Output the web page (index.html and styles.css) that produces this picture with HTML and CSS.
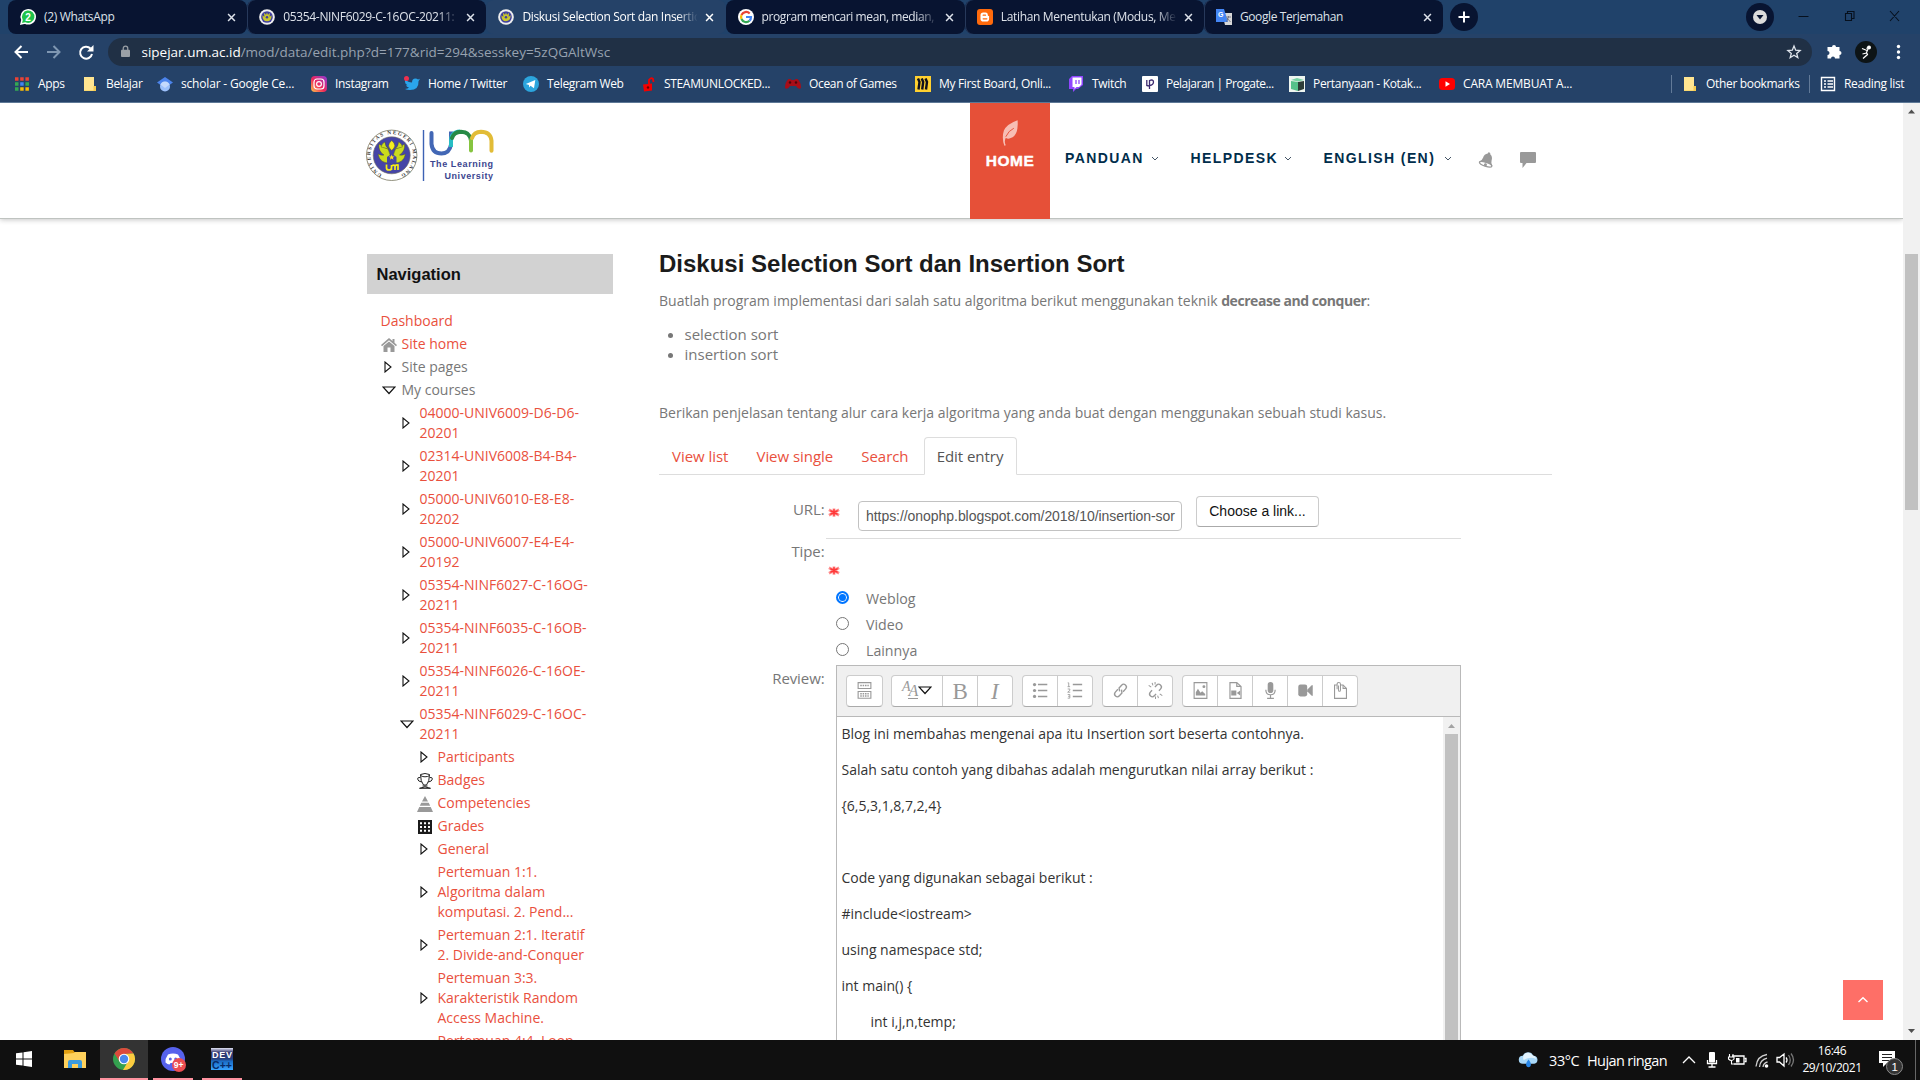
FILE: index.html
```html
<!DOCTYPE html>
<html lang="id">
<head>
<meta charset="utf-8">
<title>Diskusi Selection Sort dan Insertion Sort</title>
<link rel="stylesheet" href="styles.css">
</head>
<body>
<svg class="defs" aria-hidden="true">
  <symbol id="crest" viewBox="0 0 52 52"><circle cx="26" cy="26" r="25.5" fill="#eee"/><circle cx="26" cy="26" r="19" fill="#3f3fa0"/><path d="M26 40q-15-1-15-20 4 4 7 4-3-6 0-12 3 6 5 7l3-8 3 8q3-1 5-7 3 6 0 12 3 0 7-4 0 19-15 20z" fill="#c9c62c"/><circle cx="26" cy="27" r="4" fill="#3f3fa0"/></symbol>
  <symbol id="x" viewBox="0 0 10 10"><path d="M1.2 1.2l7.6 7.6M8.8 1.2L1.2 8.8" stroke="currentColor" stroke-width="1.7"/></symbol>
  <symbol id="folder" viewBox="0 0 14 16"><path d="M1 1h10v9h2v5H1z" fill="#ffe591"/><path d="M1 14.5h9.5V10H13v5H1z" fill="#f5cb4f"/></symbol>
  <symbol id="tri" viewBox="0 0 8 12"><path d="M1 1v10l6-5z" fill="none" stroke="#111" stroke-width="1.1"/></symbol>
  <symbol id="trid" viewBox="0 0 14 9"><path d="M1 1h12L7 7.500z" fill="none" stroke="#111" stroke-width="1.2"/></symbol>
  <symbol id="chev" viewBox="0 0 8 6"><path d="M1 1l3 3 3-3" fill="none" stroke="currentColor"/></symbol>
  <symbol id="req" viewBox="0 0 14 12"><path d="M7 1.500v9M1.500 3l11 6M12.500 3l-11 6" stroke="#ff8c8c" stroke-width="3"/><path d="M7 2.500v7M3 4l8 4M11 4l-8 4" stroke="#f33" stroke-width="1.500"/></symbol>
</svg>

<header class="browser">
  <div class="tabstrip">
    <div class="tab"><svg class="fav" viewBox="0 0 16 16"><path d="M1 15l1-4a7 7 0 1 1 3 3z" fill="#1fc34a" stroke="#fff" stroke-width="1.500"/><text x="5.200" y="11.500" font-size="10" font-weight="bold" fill="#fff">2</text></svg><span class="tt">(2) WhatsApp</span><svg class="cl"><use href="#x"/></svg></div>
    <div class="tab sep"><svg class="fav"><use href="#crest"/></svg><span class="tt fade">05354-NINF6029-C-16OC-20211:</span><svg class="cl"><use href="#x"/></svg></div>
    <div class="tab active"><svg class="fav"><use href="#crest"/></svg><span class="tt fade">Diskusi Selection Sort dan Insertio</span><svg class="cl"><use href="#x"/></svg></div>
    <div class="tab"><svg class="fav" viewBox="0 0 16 16"><circle cx="8" cy="8" r="8" fill="#fff"/><g fill="none" stroke-width="2.200"><path d="M11.700 4.500A5 5 0 0 0 3.500 6" stroke="#ea4335"/><path d="M3.500 6a5 5 0 0 0 0 4" stroke="#fbbc05"/><path d="M3.500 10a5 5 0 0 0 8 1.800" stroke="#34a853"/><path d="M11.500 11.800A5 5 0 0 0 13 8H8" stroke="#4285f4"/></g></svg><span class="tt fade tight">program mencari mean, median,</span><svg class="cl"><use href="#x"/></svg></div>
    <div class="tab sep"><svg class="fav" viewBox="0 0 16 16"><rect width="16" height="16" rx="3" fill="#ff6a0c"/><path d="M6.300 3.500h2.200a2.300 2.300 0 0 1 2.300 2.300c0 1 .4 1.200 1.300 1.300v2.600a2.800 2.800 0 0 1-2.800 2.800h-3a2.800 2.800 0 0 1-2.800-2.800V6.300a2.800 2.800 0 0 1 2.800-2.800z" fill="#fff"/><path d="M6.200 6.200h2.300M6.200 9.800h3.600" stroke="#ff6a0c" stroke-width="1.300" stroke-linecap="round"/></svg><span class="tt fade">Latihan Menentukan (Modus, Me</span><svg class="cl"><use href="#x"/></svg></div>
    <div class="tab sep"><svg class="fav" viewBox="0 0 16 16"><path d="M6 4h10v12H9z" fill="#d8d8d8"/><path d="M0 0h8l4 13H0z" fill="#4486f4"/><text x="2" y="8" font-size="7" font-weight="bold" fill="#fff">G</text><path d="M10 8h5M12.500 7v1l-2 5M11 9l3.500 4" stroke="#667" fill="none" stroke-width=".8"/></svg><span class="tt tight">Google Terjemahan</span><svg class="cl"><use href="#x"/></svg></div>
    <div class="newtab"><svg viewBox="0 0 28 28"><path d="M14 8.500v11M8.500 14h11" stroke="#fff" stroke-width="2"/></svg></div>
    <div class="newtab media"><svg viewBox="0 0 28 28"><circle cx="14" cy="14" r="7" fill="#dcdcdc"/><path d="M10.500 12h7L14 16.500z" fill="#081431"/></svg></div>
    <svg class="winctl" viewBox="0 0 110 20"><path d="M4.500 11.500h10M51.500 8.500h6v7h-6zM53.500 8v-1.500h6.500v7h-2M96 6l9 10M105 6l-9 10" fill="none" stroke="#06101d" stroke-width="1.100"/></svg>
  </div>
  <div class="toolbar">
    <svg class="navi" viewBox="0 0 88 20"><g fill="none" stroke="#fff" stroke-width="2"><path d="M20 10H8M13.500 4L7.500 10l6 6"/><path d="M39 10h12M45.500 4l6 6-6 6" stroke="#7f97b2"/><path d="M82.500 6.500A6 6 0 1 0 84 12"/></g><path d="M85.500 3v6.500H79z" fill="#fff"/></svg>
    <div class="omni"><svg class="lock" viewBox="0 0 10 14"><rect y="5" width="10" height="8" rx="1" fill="#9aa0a6"/><path d="M2.500 6V3.500a2.500 2.500 0 0 1 5 0V6" fill="none" stroke="#9aa0a6" stroke-width="1.400"/></svg><span class="url"><b>sipejar.um.ac.id</b>/mod/data/edit.php?d=177&amp;rid=294&amp;sesskey=5zQGAltWsc</span><svg class="star" viewBox="0 0 16 16"><path d="M8 2l1.700 4.200 4.400.3-3.400 2.900 1.100 4.300L8 11.300l-3.800 2.400 1.100-4.300L1.900 6.500l4.400-.3z" fill="none" stroke="#dfe5ec" stroke-width="1.300"/></svg></div>
    <svg class="tools" viewBox="0 0 90 24"><path d="M9 8h3a2 2 0 1 1 4 0h3.500v4a2 2 0 1 1 0 4v3.500H15a2 2 0 0 0-4 0H7.500V16a2 2 0 0 0 0-4V8z" transform="translate(-1 -1)" fill="#fff"/><circle cx="45" cy="12" r="11" fill="#0d1416"/><path d="M45.500 8.500l3-2M47 9l-1.500 3.500 1 2-4.500 4M46 10.500l-5-2M45.500 13l-4 1" stroke="#fff" stroke-width="1.200" fill="none"/><circle cx="48" cy="7.500" r="2" fill="#fff"/><circle cx="77.500" cy="6.500" r="1.700" fill="#fff"/><circle cx="77.500" cy="12" r="1.700" fill="#fff"/><circle cx="77.500" cy="17.500" r="1.700" fill="#fff"/></svg>
  </div>
  <div class="bookmarks">
    <div class="bm"><svg viewBox="0 0 16 16"><path d="M1 3h14" stroke="#ea4335" stroke-width="3.500" stroke-dasharray="3.500 1.700"/><path d="M1 8h3.500M11.400 8H15" stroke="#34a853" stroke-width="3.500"/><path d="M6.200 8h3.500" stroke="#4285f4" stroke-width="3.500"/><path d="M1 13h3.500" stroke="#34a853" stroke-width="3.500"/><path d="M6.200 13h8.700" stroke="#fbbc05" stroke-width="3.500" stroke-dasharray="3.500 1.700"/></svg><span>Apps</span></div>
    <div class="bm"><svg><use href="#folder"/></svg><span>Belajar</span></div>
    <div class="bm loose"><svg viewBox="0 0 16 16"><path d="M0 6.500L8 1l8 5.500L8 12z" fill="#4c84ec"/><circle cx="8" cy="10.500" r="5" fill="#9cc0fb"/><path d="M3.400 8.500a5 5 0 0 1 9.200 0L8 12z" fill="#dfe9fd" opacity=".6"/></svg><span>scholar - Google Ce...</span></div>
    <div class="bm"><svg viewBox="0 0 16 16"><defs><linearGradient id="ig" x1="0" y1="1" x2="1" y2="0"><stop stop-color="#ffc84a"/><stop offset=".45" stop-color="#f0285a"/><stop offset="1" stop-color="#8a3ad8"/></linearGradient></defs><rect width="16" height="16" rx="4" fill="url(#ig)"/><rect x="3" y="3" width="10" height="10" rx="3" fill="none" stroke="#fff" stroke-width="1.200"/><circle cx="8" cy="8" r="2.400" fill="none" stroke="#fff" stroke-width="1.200"/></svg><span>Instagram</span></div>
    <div class="bm"><svg viewBox="0 0 16 16"><path d="M1 3q3 3.500 7 3.500 0-4 3.500-4Q13 2.500 14 3.600l2-.8-1.500 2.400Q15 14 6 14 2.500 14 1 13q3 0 4-1.400Q2.500 11 2 9.300h1.500Q1 8 1 6z" fill="#2aa5ec"/><circle cx="2.500" cy="2.500" r="2.500" fill="#f0304e"/></svg><span>Home / Twitter</span></div>
    <div class="bm"><svg viewBox="0 0 16 16"><circle cx="8" cy="8" r="8" fill="#2ca5dd"/><path d="M2.800 8l9.500-4L11 12.200 7.500 9.700 6 11.500V9z" fill="#fff"/></svg><span>Telegram Web</span></div>
    <div class="bm steam"><svg viewBox="0 0 16 16"><path d="M1 8.500l9-1v7l-8 1z" fill="#f20000"/><path d="M7 8V4q2-3 4-1l.5 3" fill="none" stroke="#f20000" stroke-width="1.800"/><circle cx="6" cy="11.500" r="1.200" fill="#6a0000"/></svg><span>STEAMUNLOCKED...</span></div>
    <div class="bm"><svg viewBox="0 0 16 16"><path d="M3.500 3h2l1 1h3l1-1h2q3.500 3 3.500 9-2.500 2-5-2H5q-2.500 4-5 2 0-6 3.500-9z" fill="#a80d18"/><circle cx="5" cy="6.500" r="1.200" fill="#4d060b"/><circle cx="11" cy="6.500" r="1.200" fill="#4d060b"/></svg><span>Ocean of Games</span></div>
    <div class="bm"><svg viewBox="0 0 16 16"><path d="M0 0h16v16H0z" fill="#ffd02f"/><path d="M3 2.500l1.500 3.500L3.500 13.500M6.700 2.500L8.200 6 7.200 13.500M10.500 2.500L12 6l-1 7.500" stroke="#10101c" stroke-width="2.400" fill="none"/></svg><span>My First Board, Onli...</span></div>
    <div class="bm"><svg viewBox="0 0 16 16"><path d="M4 0h11v9l-5 4H8l-3 3v-3H1V3z" fill="#9146ff"/><path d="M4.500 1.500h9v7L11 11H8.500l-2 2v-2h-2z" fill="#fff"/><path d="M8 4v4M11 4v4" stroke="#9146ff" stroke-width="1.300"/></svg><span>Twitch</span></div>
    <div class="bm tight"><svg viewBox="0 0 16 16"><rect width="16" height="16" rx="1" fill="#fff"/><path d="M4.800 4v5.500l2 .5M7.500 13V4.500q3.800-1.500 4 1.500 0 3-4 3.500" fill="none" stroke="#3c2a70" stroke-width="1.300"/></svg><span>Pelajaran | Progate...</span></div>
    <div class="bm"><svg viewBox="0 0 16 16"><path d="M0 0h16v16H0z" fill="#eef5f0"/><path d="M2 5l7 1v9l-7-2z" fill="#55c18a"/><path d="M9 6l6-1v8l-6 2z" fill="#2d3d38"/><path d="M2 4l6-2 7 2-6 1.500z" fill="#77d3a3"/></svg><span>Pertanyaan - Kotak...</span></div>
    <div class="bm loose"><svg viewBox="0 0 16 16"><rect y="2" width="16" height="12" rx="3.500" fill="#f00"/><path d="M6.500 5.300v5.400L11 8z" fill="#fff"/></svg><span>CARA MEMBUAT A...</span></div>
    <div class="bm line"><svg><use href="#folder"/></svg><span>Other bookmarks</span></div>
    <div class="bm line"><svg viewBox="0 0 16 16"><path d="M1.500 1.500h13v13h-13zM4 5h2M7.500 5H13M4 8h2M7.500 8H13M4 11h2M7.500 11H13" fill="none" stroke="#fff" stroke-width="1.400"/></svg><span>Reading list</span></div>
  </div>
</header>

<div class="viewport">
 <div class="page">
  <div class="sitehead">
    <svg class="logo" viewBox="366 129 130 54">
      <defs><path id="ring" d="M391.700 176.700a21.300 21.300 0 1 1 .1 0"/></defs>
      <circle cx="391.700" cy="155.300" r="25.200" fill="#fff" stroke="#77765f" stroke-width=".8"/>
      <circle cx="391.700" cy="155.300" r="18.500" fill="#4545a6" stroke="#77765f" stroke-width=".6"/>
      <text class="ringtext" font-size="5.200"><textPath href="#ring" startOffset="10" textLength="114">UNIVERSITAS NEGERI MALANG</textPath></text>
      <g fill="#cbdc1e" stroke="#4a4f20" stroke-width=".4"><path d="M391 163q-11 1-13-9 4 2 6 1-6-4-5-11 5 4 9 5 3 6 3 14zM392.500 163q11 1 13-9-4 2-6 1 6-4 5-11-5 4-9 5-3 6-3 14z"/><path d="M381 147q1-4 4-5 0 5 4 7zM402.500 147q-1-4-4-5 0 5-4 7z"/><path d="M391.700 140.500q6 5 0 10-6-5 0-10z" fill="#f5ef20"/></g><path d="M387 163v-6q5-5 9.500 0v6z" fill="#4545a6"/><path d="M391.700 154.500l.8 2h2l-1.600 1.300.6 2-1.800-1.200-1.800 1.200.6-2-1.600-1.300h2z" fill="#ffe51e"/>
      <path d="M386.500 164.500v3.500q0 2 2.500 2t2.500-2v-3M391.500 170v-4q4-2 3.500 1v3-3q0-2.500 3-2v5" fill="none" stroke="#f6ef14" stroke-width="1.700"/>
      <path d="M423.500 130v51" stroke="#3c62b4" stroke-width="1.400"/>
      <g fill="none" stroke-width="4" stroke-linecap="round"><path d="M431.500 133v11q1 9.500 10 9.500 8 0 9.500-9" stroke="#4267b5"/><path d="M451 144v-12.500" stroke="#4267b5" stroke-linecap="butt"/><path d="M451 147v-6q0-9 9-9.500" stroke="#27bdc4" stroke-linecap="butt"/><path d="M452 138q2-6 9-6.300 9 0 10 9" stroke="#278a45"/><path d="M471 140v10.500" stroke="#86c440"/><path d="M472 138q2-6 9-6.300 9.500 0 10.500 9v10" stroke="#e2bc37"/></g>
      <text x="430" y="167.200" font-size="9" font-weight="bold" fill="#3b4590" textLength="63">The Learning</text><text x="444.500" y="179" font-size="9" font-weight="bold" fill="#3b4590" textLength="48.500">University</text>
    </svg>
    <nav class="menu">
      <a class="home"><svg viewBox="0 0 18 28"><path d="M16.500 1Q18 19 7 20.500q-2 0-3-1-2 4 0 8l-1.500.5Q-.5 20 2 12 5 5 16.500 1z" fill="#f7beb4"/><path d="M4 18.500Q7 12 12.500 9.500" stroke="#e65038" fill="none"/></svg><span>HOME</span></a>
      <a class="mi pan">PANDUAN<svg><use href="#chev"/></svg></a>
      <a class="mi help">HELPDESK<svg><use href="#chev"/></svg></a>
      <a class="mi eng">ENGLISH (EN)<svg><use href="#chev"/></svg></a>
      <svg class="bell" viewBox="0 0 16 16"><g transform="rotate(18 8 8)"><path d="M8 0q1.300 0 1.300 1.500Q12.500 3 12.500 7q0 3 2.500 5H1q2.500-2 2.500-5 0-4 3.200-5.500Q6.700 0 8 0z" fill="#999"/><ellipse cx="8" cy="12.500" rx="6.500" ry="2" fill="#fff" stroke="#999" stroke-width="1.300"/><circle cx="8" cy="13" r="1.500" fill="#999"/></g></svg>
      <svg class="chat" viewBox="0 0 16 16"><path d="M1 0h14q1 0 1 1v9q0 1-1 1H6.500L2.500 16V11H1q-1 0-1-1V1q0-1 1-1z" fill="#999"/></svg>
    </nav>
  </div>

  <div class="columns">
    <aside>
      <h2>Navigation</h2>
      <ul class="tree">
        <li class="l0"><a>Dashboard</a></li>
        <li class="l1"><i><svg class="s16" viewBox="0 0 16 14"><path d="M8 0L0 7l1 1.200L8 2.200l7 6L16 7l-2.500-2.200V1h-2v2z" fill="#999"/><path d="M8 3.500L2.500 8v6h4V9.500h3V14h4V8z" fill="#999"/></svg></i><a>Site home</a></li>
        <li class="l1 plain"><i><svg class="tr"><use href="#tri"/></svg></i><span>Site pages</span></li>
        <li class="l1 plain"><i><svg class="td"><use href="#trid"/></svg></i><span>My courses</span></li>
        <li class="l2"><i><svg class="tr"><use href="#tri"/></svg></i><a>04000-UNIV6009-D6-D6-<br>20201</a></li>
        <li class="l2"><i><svg class="tr"><use href="#tri"/></svg></i><a>02314-UNIV6008-B4-B4-<br>20201</a></li>
        <li class="l2"><i><svg class="tr"><use href="#tri"/></svg></i><a>05000-UNIV6010-E8-E8-<br>20202</a></li>
        <li class="l2"><i><svg class="tr"><use href="#tri"/></svg></i><a>05000-UNIV6007-E4-E4-<br>20192</a></li>
        <li class="l2"><i><svg class="tr"><use href="#tri"/></svg></i><a>05354-NINF6027-C-16OG-<br>20211</a></li>
        <li class="l2"><i><svg class="tr"><use href="#tri"/></svg></i><a>05354-NINF6035-C-16OB-<br>20211</a></li>
        <li class="l2"><i><svg class="tr"><use href="#tri"/></svg></i><a>05354-NINF6026-C-16OE-<br>20211</a></li>
        <li class="l2"><i><svg class="td"><use href="#trid"/></svg></i><a>05354-NINF6029-C-16OC-<br>20211</a></li>
        <li class="l3"><i><svg class="tr"><use href="#tri"/></svg></i><a>Participants</a></li>
        <li class="l3"><i><svg class="s16" viewBox="0 0 16 16"><path d="M3.500 1.500Q8-.5 12.500 1.500q0 7-3 10.500h-3Q3.500 8.500 3.500 1.500zM3.500 2.500Q6 4 8 3.800q3 0 4.500-1.300M3.300 4.500Q.5 4 .6 6 1 8.500 4.700 9M12.700 4.500q2.800-.5 2.700 1.500-.4 2.500-4.100 3M5.500 13h5M2.500 15.300Q8 12.500 13.500 15.300z" fill="none" stroke="#222" stroke-width="1"/></svg></i><a>Badges</a></li>
        <li class="l3"><i><svg class="s16" viewBox="0 0 16 16"><path d="M8 0l3 5.500H5zM4.300 6.700h7.400l1.500 3H2.800zM2.300 11h11.400L16 16H0z" fill="#999"/></svg></i><a>Competencies</a></li>
        <li class="l3"><i><svg class="s14" viewBox="0 0 14 14"><path d="M0 0h14v14H0z" fill="#1b1b1b"/><path d="M2 3.300h10M2 7h10M2 10.700h10" stroke="#fff" stroke-width="2" stroke-dasharray="2 2"/></svg></i><a>Grades</a></li>
        <li class="l3"><i><svg class="tr"><use href="#tri"/></svg></i><a>General</a></li>
        <li class="l3"><i><svg class="tr"><use href="#tri"/></svg></i><a>Pertemuan 1:1.<br>Algoritma dalam<br>komputasi. 2. Pend...</a></li>
        <li class="l3"><i><svg class="tr"><use href="#tri"/></svg></i><a>Pertemuan 2:1. Iteratif<br>2. Divide-and-Conquer</a></li>
        <li class="l3"><i><svg class="tr"><use href="#tri"/></svg></i><a>Pertemuan 3:3.<br>Karakteristik Random<br>Access Machine.</a></li>
        <li class="l3"><i></i><a>Pertemuan 4:4. Loop</a></li>
      </ul>
    </aside>

    <main>
      <h1>Diskusi Selection Sort dan Insertion Sort</h1>
      <p class="intro">Buatlah program implementasi dari salah satu algoritma berikut menggunakan teknik <strong>decrease and conquer</strong>:</p>
      <ul class="kinds"><li>selection sort</li><li>insertion sort</li></ul>
      <p class="intro">Berikan penjelasan tentang alur cara kerja algoritma yang anda buat dengan menggunakan sebuah studi kasus.</p>
      <div class="tabs"><a>View list</a><a>View single</a><a>Search</a><a class="on">Edit entry</a></div>
      <form>
        <div class="row urlrow"><label>URL:</label><svg class="req"><use href="#req"/></svg><div class="field">https://onophp.blogspot.com/2018/10/insertion-sor</div><div class="choose">Choose a link...</div></div>
        <div class="row tipe"><label>Tipe:</label><div class="opts"><svg class="req"><use href="#req"/></svg>
          <div class="opt"><span class="radio on"></span>Weblog</div>
          <div class="opt"><span class="radio"></span>Video</div>
          <div class="opt"><span class="radio"></span>Lainnya</div></div></div>
        <div class="row rev"><label>Review:</label>
          <div class="editor">
            <div class="bar">
              <div class="grp"><b><svg viewBox="0 0 18 20"><path d="M1.500.7h15v7h-15zM1.500 11.200h15v8h-15z" fill="none" stroke="#999" stroke-width="1.300"/><path d="M4 4.200h10M4 13.700h10M4 16.500h10" stroke="#999" stroke-width="1.800" stroke-dasharray="1.800 1"/></svg></b></div>
              <div class="grp"><b class="wide"><em class="a1">A</em><em class="a2">A</em><svg class="dd"><use href="#trid"/></svg></b><b class="ser">B</b><b class="ser it">I</b></div>
              <div class="grp"><b><svg viewBox="0 0 18 20"><path d="M6 3h11M6 10h11M6 17h11" stroke="#999" stroke-width="1.800"/><circle cx="2" cy="3" r="1.900" fill="#999"/><circle cx="2" cy="10" r="1.900" fill="#999"/><circle cx="2" cy="17" r="1.900" fill="#999"/></svg></b><b><svg viewBox="0 0 18 20"><path d="M7 3h11M7 10h11M7 17h11" stroke="#999" stroke-width="1.800"/><path d="M1 1h1.200v4.500M.8 5.500h3M1 8.200h2.500v1.500L1 12h3M1 14.700h2.500V19H1M1.500 16.800h2" fill="none" stroke="#999"/></svg></b></div>
              <div class="grp"><b><svg viewBox="0 0 18 20"><g fill="none" stroke="#999" stroke-width="1.600" transform="rotate(-48 9 10)"><path d="M8 6.800H3.500a3.200 3.200 0 0 0 0 6.400H8l2.500-3"/><path d="M10 13.200h4.500a3.200 3.200 0 0 0 0-6.400H10L7.500 10"/></g></svg></b><b><svg viewBox="0 0 18 20"><g fill="none" stroke="#999" stroke-width="1.600" transform="rotate(-48 9 10)"><path d="M6.500 6.800h-3a3.200 3.200 0 0 0 0 6.400h3M11.500 13.200h3a3.200 3.200 0 0 0 0-6.400h-3"/></g><path d="M5 1l1 3M1 4l3 2M8.500 0v3M12.500 19l-1-3M17 16l-3-2M9 20v-3" stroke="#999" stroke-width="1.200"/></svg></b></div>
              <div class="grp"><b><svg viewBox="0 0 18 20"><path d="M1.500.7h15v18.600h-15z" fill="none" stroke="#999" stroke-width="1.300"/><path d="M3.500 16V12l2.500-4 3 4.500 2-1.500 3.500 3v2z" fill="#999"/><circle cx="13" cy="5.500" r="1.700" fill="#999"/></svg></b><b><svg viewBox="0 0 18 20"><path d="M2.500.7h8l5 4.500v14h-13zM10.500.7v4.500h5" fill="none" stroke="#999" stroke-width="1.400"/><path d="M4 10h6v6H4zM10.500 13l4-3v6z" fill="#999"/></svg></b><b><svg viewBox="0 0 18 20"><rect x="5.700" width="6.600" height="13" rx="3.300" fill="#999"/><path d="M3.500 9q0 6 5.500 6t5.500-6M9 15v4M5 19.200h8" fill="none" stroke="#999" stroke-width="1.400"/></svg></b><b><svg viewBox="0 0 18 20"><rect x=".5" y="3" width="10.500" height="14" rx="2.500" fill="#999"/><path d="M11 9l5-5q1.500-1 1.500.5v11q0 1.500-1.500.5l-5-5z" fill="#999"/></svg></b><b><svg viewBox="0 0 18 20"><path d="M5 3.500H2v15.800h14V7.500l-4-4H9" fill="none" stroke="#999" stroke-width="1.300"/><path d="M12 3.500v4h4M5 8.500V2.500Q5 .7 7 .7t2 1.800V9q0 2-1.200 2T6.700 9V4" fill="none" stroke="#999" stroke-width="1.200"/></svg></b></div>
            </div>
            <div class="pane">
              <div class="text"><p>Blog ini membahas mengenai apa itu Insertion sort beserta contohnya.</p><p>Salah satu contoh yang dibahas adalah mengurutkan nilai array berikut :</p><p>{6,5,3,1,8,7,2,4}</p><p>&nbsp;</p><p>Code yang digunakan sebagai berikut :</p><p>#include&lt;iostream&gt;</p><p>using namespace std;</p><p>int main() {</p><p class="ind">int i,j,n,temp;</p></div>
              <div class="sb"><svg viewBox="0 0 17 17"><path d="M5 11h7L8.500 7z" fill="#a3a3a3"/></svg><div class="thumb"></div></div>
            </div>
          </div></div>
      </form>
    </main>
  </div>
  <div class="totop"><svg viewBox="0 0 12 8"><path d="M1.500 6L6 1.800 10.500 6" fill="none" stroke="#fff" stroke-width="1.400"/></svg></div>
 </div>
 <div class="scroll"><svg viewBox="0 0 17 17"><path d="M5 10.500h7L8.500 6.500z" fill="#505050"/></svg><div class="thumb"></div><svg viewBox="0 0 17 17"><path d="M5 6h7l-3.500 4z" fill="#505050"/></svg></div>
</div>

<footer class="taskbar">
  <div class="cell"><svg width="16" height="16" viewBox="0 0 16 16"><path d="M0 2.300l6.500-.9v6.100H0zM7.500 1.200L16 0v7.500H7.500zM0 8.500h6.500v6.100L0 13.700zM7.500 8.500H16V16l-8.500-1.200z" fill="#fff"/></svg></div>
  <div class="cell"><svg width="22" height="18" viewBox="0 0 22 18"><path d="M0 0h9l1.500 2H21v3H0z" fill="#e3a011"/><path d="M0 4l10-1 1-1h11v16H0z" fill="#ffd15c"/><path d="M4 18v-6q0-2 2-2h10q2 0 2 2v6h-4v-4H8v4z" fill="#3b9be0"/></svg></div>
  <div class="cell cur"><svg width="24" height="24" viewBox="0 0 24 24"><circle cx="12" cy="12" r="11" fill="#34a04f"/><path d="M2.500 6.500A11 11 0 0 1 21.500 6.500L12 7 7.500 14.500z" fill="#dc4a3c"/><path d="M21.500 6.500A11 11 0 0 1 11 23l5-8.500L12 7z" fill="#fccb3f"/><circle cx="12" cy="12" r="5.300" fill="#fff"/><circle cx="12" cy="12" r="4.200" fill="#4a88ee"/></svg></div>
  <div class="cell run"><svg width="26" height="26" viewBox="0 0 26 26"><circle cx="13" cy="13" r="12" fill="#5662ec"/><path d="M8 8.500q5-2 10 0 3 4 2.500 8-2 2-4 2l-1-1.500h-5L9.500 18.500q-2 0-4-2Q5 12.500 8 8.500z" fill="#fff"/><circle cx="10.300" cy="13" r="1.500" fill="#5662ec"/><circle cx="15.700" cy="13" r="1.500" fill="#5662ec"/><circle cx="19" cy="19" r="7" fill="#ec4d52"/><text x="13.800" y="22" font-size="8.500" fill="#fff" font-weight="bold">9+</text></svg></div>
  <div class="cell run"><svg width="22" height="22" viewBox="0 0 22 22"><defs><linearGradient id="dv" x1="0" y1="0" x2="0" y2="1"><stop stop-color="#e4e6f6"/><stop offset=".2" stop-color="#33366e"/><stop offset=".5" stop-color="#27407e"/><stop offset=".6" stop-color="#1b6cc4"/><stop offset="1" stop-color="#38a4ff"/></linearGradient></defs><path d="M0 0h22v22H0z" fill="url(#dv)"/><text x="1" y="10" font-size="9" font-weight="bold" fill="#fff" textLength="20">DEV</text><text x="1" y="20.500" font-size="10.500" font-weight="bold" fill="#082a66" textLength="20">C++</text></svg></div>
  <div class="tray">
    <svg class="cloud" viewBox="0 0 22 18"><path d="M5 13a4.200 4.200 0 0 1 0-8.400A6 6 0 0 1 16 4.500 4.300 4.300 0 0 1 17 13z" fill="#a9d8f8"/><path d="M6 9a5 5 0 0 1 9-5 5 5 0 0 1 4 4q-6-3-13 1z" fill="#e3f3fd"/><path d="M11 8.500q4 5 1.800 7.300-1.800 1.500-3.600 0Q7 13.500 11 8.500z" fill="#2786e8"/></svg>
    <span class="wx deg">33°C</span><span class="wx rain">Hujan ringan</span>
    <svg class="icons" viewBox="0 0 120 24"><g fill="none" stroke="#fff" stroke-width="1.300"><path d="M3 15l6-6 6 6"/><path d="M27.500 12v3.500h9V12M32 15.500V19M28.500 19h7M52 8h12v8H54"/><path d="M49.500 6v3M53 6v3M48.500 9H54v2q-2.500 3-5.500 0zM51.500 13v3H54" stroke-width="1.100"/><path d="M64.500 10.500H66v3h-1.500" /><path d="M76 18.500Q77 8 87 6.500M79.500 19Q80 12 87 10.200M83 19q.5-4 4.500-5" stroke="#cfcfcf"/><path d="M97 9.500h2.500L104 6v12l-4.500-4H97zM106 9.500q2 2.500 0 5"/><path d="M108.500 7q3.500 5 0 10M111 5.500q5 6.500 0 13" stroke="#777"/></g><rect x="29" y="4" width="6" height="10.500" rx="1" fill="#fff"/><path d="M56 10h3.500v4.500H56z" fill="#fff"/><circle cx="86.500" cy="18" r="1.800" fill="#fff"/></svg>
    <div class="clock"><span class="tm">16:46</span><span>29/10/2021</span></div>
    <svg class="note" viewBox="0 0 26 26"><path d="M1 1h16v12H9l-4 4v-4H1z" fill="#fff"/><path d="M4 4.500h10M4 7.500h10M4 10.500h10" stroke="#222" stroke-width="1.200"/><circle cx="16.500" cy="16.500" r="8" fill="#333" stroke="#8a8a8a"/><text x="13.600" y="20.500" font-size="11.500" fill="#fff">1</text></svg>
  </div>
</footer>
</body>
</html>
```
FILE: styles.css
```css
* { box-sizing: border-box; }
body { margin: 0; width: 1920px; height: 1080px; overflow: hidden; background: #fff; color: #777; font-family: "Open Sans", "Noto Sans", sans-serif; font-size: 14px; display: flex; flex-direction: column; }
svg { display: block; flex: none; overflow: visible; }
.defs { width: 0; height: 0; position: absolute; }
svg text { font-family: "Liberation Sans", Arial, sans-serif; }

/* browser window */
.browser { height: 103px; background: #254268; border-bottom: 1px solid #5d7896; color: #fff; font-size: 12px; flex: none; }
.tabstrip { height: 34px; display: flex; align-items: center; background: #20426a; padding-left: 8px; }
.tab { width: 239.200px; height: 34px; display: flex; align-items: center; padding-left: 12px; background: #081431; color: #dde2ea; border-radius: 8px; flex: none; }
.tab.active { background: #254268; color: #fff; }
.tab.sep { box-shadow: inset 1px 0 0 #27395b; }
.fav { width: 16px; height: 16px; }
.tt { margin: -1px 0 0 8px; width: 175px; white-space: nowrap; letter-spacing: -.33px; }
.tt.tight { letter-spacing: -.4px; }
.fade { -webkit-mask-image: linear-gradient(90deg, #000 155px, transparent 176px); }
.cl { width: 9px; height: 9px; margin-left: 8px; }
.newtab { width: 28px; height: 28px; border-radius: 14px; background: #081431; margin-left: 7px; }
.media { margin-left: 268px; }
.winctl { width: 110px; height: 20px; margin: -5px 0 0 20px; }
.toolbar { height: 35px; display: flex; align-items: center; }
.navi { width: 88px; height: 20px; margin-left: 8px; }
.omni { width: 1704px; height: 28px; margin-left: 12px; border-radius: 14px; background: #203045; display: flex; align-items: center; padding-left: 13px; }
.lock { width: 9px; height: 13px; }
.url { margin-left: 11.500px; width: 1644.500px; font-size: 13.500px; color: #97a2b0; letter-spacing: 0; }
.url b { color: #fff; font-weight: 400; }
.star { width: 16px; height: 16px; margin-top: 1px; }
.tools { width: 90px; height: 24px; margin-left: 9px; }
.bookmarks { height: 30px; display: grid; align-items: center; grid-template-columns: 68px 75px 154px 93px 119px 119px 143px 130px 153px 74px 147px 150px 232px 138px 110px; padding-left: 14px; }
.bm { display: flex; align-items: center; gap: 8px; white-space: nowrap; letter-spacing: -.33px; height: 18px; }
.bm.loose { letter-spacing: -.18px; }
.bm.tight { letter-spacing: -.48px; }
.bm.steam { gap: 6px; letter-spacing: -.33px; }
.bm svg { width: 16px; height: 16px; }
.bm span { margin-top: -1px; }
.bm.line { border-left: 1px solid #627a98; padding-left: 10px; }

/* site */
.viewport { height: 937px; display: flex; overflow: hidden; flex: none; }
.page { width: 1903px; position: relative; overflow: hidden; }
.sitehead { height: 116px; border-bottom: 1px solid #bfc3c0; box-shadow: 0 1px 5px rgba(0,0,0,.22); padding-left: 366px; display: flex; }
.logo { width: 130px; height: 54px; margin-top: 26px; }
.ringtext { font-weight: bold; fill: #333; font-family: "Liberation Serif", serif; }
.menu { display: flex; margin-left: 474px; font-family: "Liberation Sans", Arial, sans-serif; font-weight: bold; color: #002d4b; }
.home { width: 80px; height: 116px; background: #e65038; color: #fff; display: flex; flex-direction: column; align-items: center; padding-top: 16px; font-size: 15.500px; line-height: 18px; letter-spacing: .5px; -webkit-text-stroke: .4px #fff; }
.home svg { width: 17px; height: 27px; margin-bottom: 6px; }
.mi { display: flex; align-items: center; height: 110px; font-size: 14px; letter-spacing: 1.400px; white-space: nowrap; justify-content: space-between; }
.mi svg { width: 8px; height: 6px; color: #456; margin-top: 2px; }
.pan { margin-left: 15px; width: 94px; }
.help { margin-left: 31.500px; width: 101.500px; }
.eng { margin-left: 31.500px; width: 128px; }
.bell { width: 16px; height: 16px; margin: 49px 0 0 27px; }
.chat { width: 16px; height: 16px; margin: 49px 0 0 25px; }
.columns { display: flex; padding: 35px 0 0 367px; }
aside { width: 246px; flex: none; }
h2 { margin: 0 0 17px; height: 40px; background: #d2d2d2; color: #111; font: bold 16.500px/41px "Liberation Sans", Arial, sans-serif; padding-left: 9.500px; }
.tree { list-style: none; margin: 0; padding: 0; line-height: 20px; color: #e9503d; white-space: nowrap; }
.tree li { display: flex; align-items: center; padding-bottom: 3px; }
.tree i { width: 16px; display: flex; justify-content: center; margin-right: 5px; flex: none; }
.plain { color: #777; }
.l0 { padding-left: 13.500px; }
.l1 { padding-left: 13.500px; }
.l2 { padding-left: 31.500px; }
.l3 { padding-left: 49.500px; }
.tr { width: 8px; height: 12px; margin: -1px 1px 0 0; }
.td { width: 14px; height: 9px; }
.s16 { width: 16px; height: 16px; margin-top: 2px; }
.s14 { width: 14px; height: 14px; margin-top: 2px; }
main { margin-left: 46px; width: 893px; }
h1 { margin: -4px 0 0; font: bold 24px/28px "Liberation Sans", Arial, sans-serif; color: #1b1b1b; white-space: nowrap; }
.intro { margin: 13px 0 0; line-height: 20px; white-space: nowrap; }
.intro strong { letter-spacing: -.45px; }
.kinds { margin: 13px 0 39px; padding-left: 25.500px; font-size: 15px; line-height: 20px; }
.tabs { display: flex; height: 38px; margin: 14px 0 0; border-bottom: 1px solid #ddd; color: #e9503d; font-size: 15px; line-height: 38px; letter-spacing: -.05px; }
.tabs a { margin-left: 13px; margin-right: 15.200px; }
.tabs .on { height: 38px; width: 93px; margin: 0; border: 1px solid #ddd; border-bottom-color: #fff; border-radius: 4px 4px 0 0; color: #555; padding-left: 12px; line-height: 36px; }
form { font-size: 15px; padding-left: 1px; }
.row { display: flex; }
.row label { width: 164.500px; margin-right: 1.500px; text-align: right; flex: none; letter-spacing: -.1px; line-height: 20px; }
.req { width: 14px; height: 11px; margin-left: 1px; }
.urlrow { height: 63px; }
.urlrow label { margin-top: 24px; }
.urlrow .req { margin-top: 32px; }
.field { margin: 26px 0 0 17px; width: 324px; height: 30px; border: 1px solid #c2c2c2; border-radius: 4px; font: 14px/29px "Liberation Sans", Arial, sans-serif; letter-spacing: -.05px; color: #555; padding-left: 7px; white-space: nowrap; }
.choose { margin: 21px 0 0 14px; width: 123px; height: 31px; border: 1px solid #ccc; border-bottom-color: #aaa; border-radius: 4px; font: 14px/29px "Liberation Sans", Arial, sans-serif; color: #111; text-align: center; }
.tipe { height: 127px; }
.tipe label { margin-top: 3px; }
.opts { width: 635px; border-top: 1px solid #ddd; }
.opts .req { margin: 26px 0 9px 1px; }
.opt { height: 26px; display: flex; align-items: center; font-size: 14.200px; padding-left: 10px; gap: 17px; }
.radio { width: 13px; height: 13px; border: 1px solid #767676; border-radius: 50%; margin-top: -2px; }
.radio.on { border: 2px solid #0075ff; background: #0075ff; box-shadow: inset 0 0 0 1px #fff; }
.rev label { margin-top: 3px; }
.editor { margin-left: 10px; width: 625px; border: 1px solid #b9b9b9; border-bottom: 0; height: 400px; }
.bar { height: 51px; background: #f0f0f0; border-bottom: 1px solid #b9b9b9; display: flex; gap: 9.600px; padding: 9px 0 0 9px; }
.grp { height: 32px; border: 1px solid #ccc; border-bottom-color: #aaa; border-radius: 4px; background: #fff; display: flex; }
.grp:first-child { margin-right: -1px; }
.grp b { width: 35px; display: flex; align-items: center; justify-content: center; color: #999; font-weight: 400; }
.grp b:first-child { width: 34px; }
.grp b:last-child { width: 34.500px; }
.grp b + b { border-left: 1px solid #ccc; }
.grp b svg { width: 17px; height: 17px; margin-top: -2px; }
.grp b.wide { width: 50px; }
.ser, .wide { font-family: "Liberation Serif", serif; font-size: 23px; line-height: 29px; }
.ser.it { font-style: italic; }
.a1 { font-size: 14px; margin-top: -10px; }
.a2 { font-size: 16px; line-height: 14px; margin-left: -2px; border-bottom: 1px solid #999; }
.grp b svg.dd { width: 14px; height: 9px; }
.pane { display: flex; height: 349px; justify-content: space-between; }
.text { padding: 7px 0 0 4.500px; font-size: 14px; color: #333; }
.text p { margin: 0 0 16px; line-height: 20px; white-space: nowrap; }
.text .ind { padding-left: 29px; }
.sb { width: 17px; background: #f1f1f1; }
.sb .thumb { width: 13px; height: 340px; margin-left: 2px; background: #c1c1c1; }
.sb svg, .scroll svg { width: 17px; height: 17px; }
.totop { position: absolute; left: 1843px; top: 877px; width: 40px; height: 40px; background: #fe6f67; display: flex; align-items: center; justify-content: center; }
.totop svg { width: 12px; height: 8px; }
.scroll { width: 17px; background: #f1f1f1; display: flex; flex-direction: column; }
.scroll .thumb { width: 13px; height: 256px; margin: 134px 2px auto; background: #c1c1c1; }

/* desktop taskbar */
.taskbar { height: 40px; flex: none; background: #101010; color: #fff; display: flex; }
.cell { width: 50px; padding: 0; display: flex; align-items: center; justify-content: center; border-bottom: 2px solid transparent; }
.cell:first-child { width: 48px; }
.cell:nth-child(2) { width: 52px; padding-left: 2px; }
.cur { width: 48px; background: #333; border-bottom-color: #ff93a0; }
.run { background: linear-gradient(#ff93a0, #ff93a0) 50% 38px / 40px 2px no-repeat; background-origin: border-box; background-clip: border-box; }
.run:nth-child(5) { width: 48px; }
.tray { margin-left: auto; width: 402px; display: flex; align-items: center; border: 0; box-shadow: inset -4px 0 #101010, inset -5px 0 #666; }
.cloud { width: 21px; height: 18px; }
.wx { font-size: 14.500px; letter-spacing: -.4px; white-space: nowrap; }
.deg { margin: 0 8px 0 10px; width: 30px; }
.rain { letter-spacing: -.6px; width: 82px; }
.icons { width: 120px; height: 24px; margin-left: 11px; }
.clock { width: 70px; margin: -2px 0 0 -3px; display: flex; flex-direction: column; text-align: center; font-size: 12px; line-height: 17px; letter-spacing: -.45px; }
.note { width: 26px; height: 26px; margin: 6px 0 0 11px; }
```
